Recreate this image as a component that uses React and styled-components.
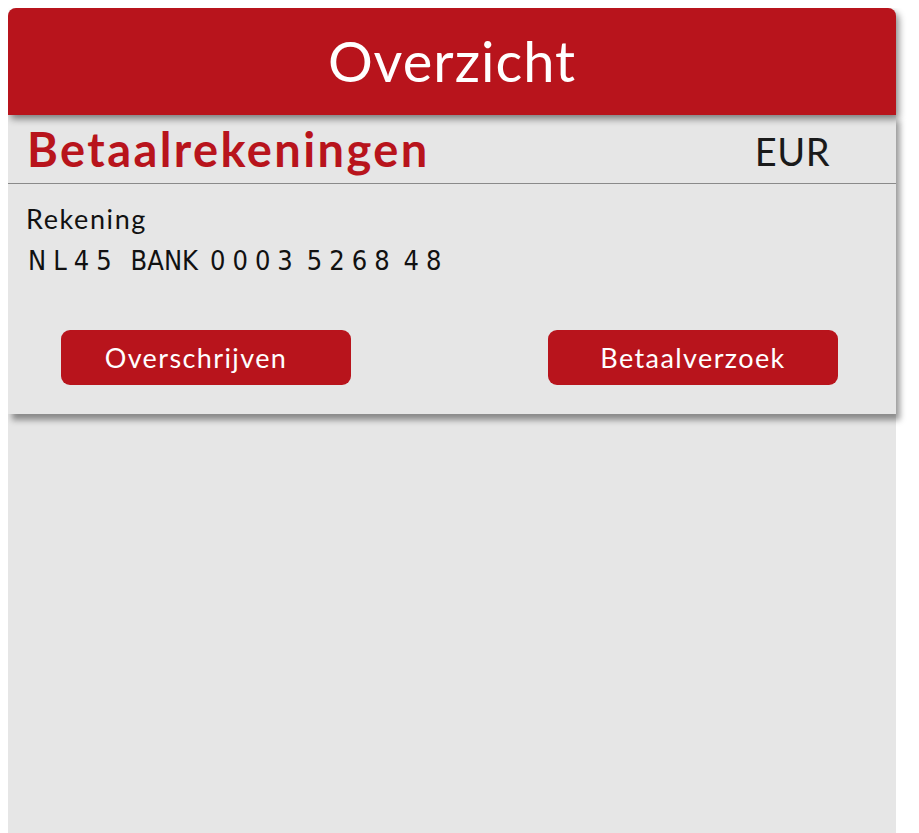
import React from "react";
import styled, { createGlobalStyle } from "styled-components";

const Global = createGlobalStyle`
  html, body { margin: 0; padding: 0; background: #ffffff; }
  body { margin: 8px; font-family: "Lato", "Open Sans", sans-serif; }
`;

const Page = styled.div`
  width: 888px;
  min-height: calc(100vh - 8px);
  background: #e6e6e6;
  border-radius: 8px 8px 0 0;
`;

const Header = styled.header`
  position: relative;
  z-index: 2;
  height: 107px;
  background: #b8141c;
  border-radius: 8px 8px 0 0;
  box-shadow: 3px 4px 7px rgba(0, 0, 0, 0.45);
  display: flex;
  align-items: center;
  justify-content: center;
`;

const Title = styled.h1`
  margin: 0;
  color: #ffffff;
  font-weight: 400;
  font-size: 56px;
  letter-spacing: 1px;
  line-height: 1;
  padding-bottom: 1px;
`;

const Card = styled.section`
  position: relative;
  z-index: 1;
  background: #e6e6e6;
  box-shadow: 4px 6px 6px rgba(0, 0, 0, 0.4);
  padding-bottom: 29px;
`;

const CardHead = styled.div`
  height: 68px;
  display: flex;
  align-items: center;
  justify-content: space-between;
  padding: 0 66px 0 19px;
  border-bottom: 1px solid #8a8a8a;
`;

const SectionTitle = styled.h2`
  margin: 0;
  color: #b8141c;
  font-weight: 700;
  font-size: 47px;
  letter-spacing: 2.4px;
  line-height: 1;
`;

const Currency = styled.span`
  color: #1a1a1a;
  font-size: 38px;
  letter-spacing: 0.5px;
  line-height: 1;
  padding-top: 4px;
`;

const Body = styled.div`
  padding: 18px 18px 0 18px;
`;

const Label = styled.div`
  font-size: 27px;
  letter-spacing: 1.6px;
  color: #111;
  line-height: 34px;
`;

const Iban = styled.div`
  margin-top: 9px;
  font-family: "DejaVu Sans Condensed", "DejaVu Sans", sans-serif;
  font-size: 27px;
  color: #111;
  line-height: 32px;
  padding-left: 2px;
`;

const Group = styled.span`
  letter-spacing: ${(p) => (p.$tight ? "0px" : "7px")};
  margin-right: ${(p) => p.$gap || 7}px;
`;

const Actions = styled.div`
  margin-top: 53px;
  display: flex;
  justify-content: space-between;
  padding: 0 58px 0 53px;
`;

const Button = styled.button`
  width: 290px;
  height: 55px;
  border: none;
  border-radius: 9px;
  background: #b8141c;
  color: #ffffff;
  font-family: "Lato", "Open Sans", sans-serif;
  font-size: 27px;
  letter-spacing: 1.4px;
  padding: 0 ${(p) => p.$shift || 0}px 0 0;
  cursor: pointer;
`;

export default function App() {
  return (
    <>
      <Global />
      <Page>
        <Header>
          <Title>Overzicht</Title>
        </Header>
        <Card>
          <CardHead>
            <SectionTitle>Betaalrekeningen</SectionTitle>
            <Currency>EUR</Currency>
          </CardHead>
          <Body>
            <Label>Rekening</Label>
            <Iban>
              <Group $gap={12}>NL45</Group>
              <Group $tight $gap={12}>BANK</Group>
              <Group>0003</Group>
              <Group>5268</Group>
              <Group>48</Group>
            </Iban>
          </Body>
          <Actions>
            <Button $shift={20}>Overschrijven</Button>
            <Button>Betaalverzoek</Button>
          </Actions>
        </Card>
      </Page>
    </>
  );
}
